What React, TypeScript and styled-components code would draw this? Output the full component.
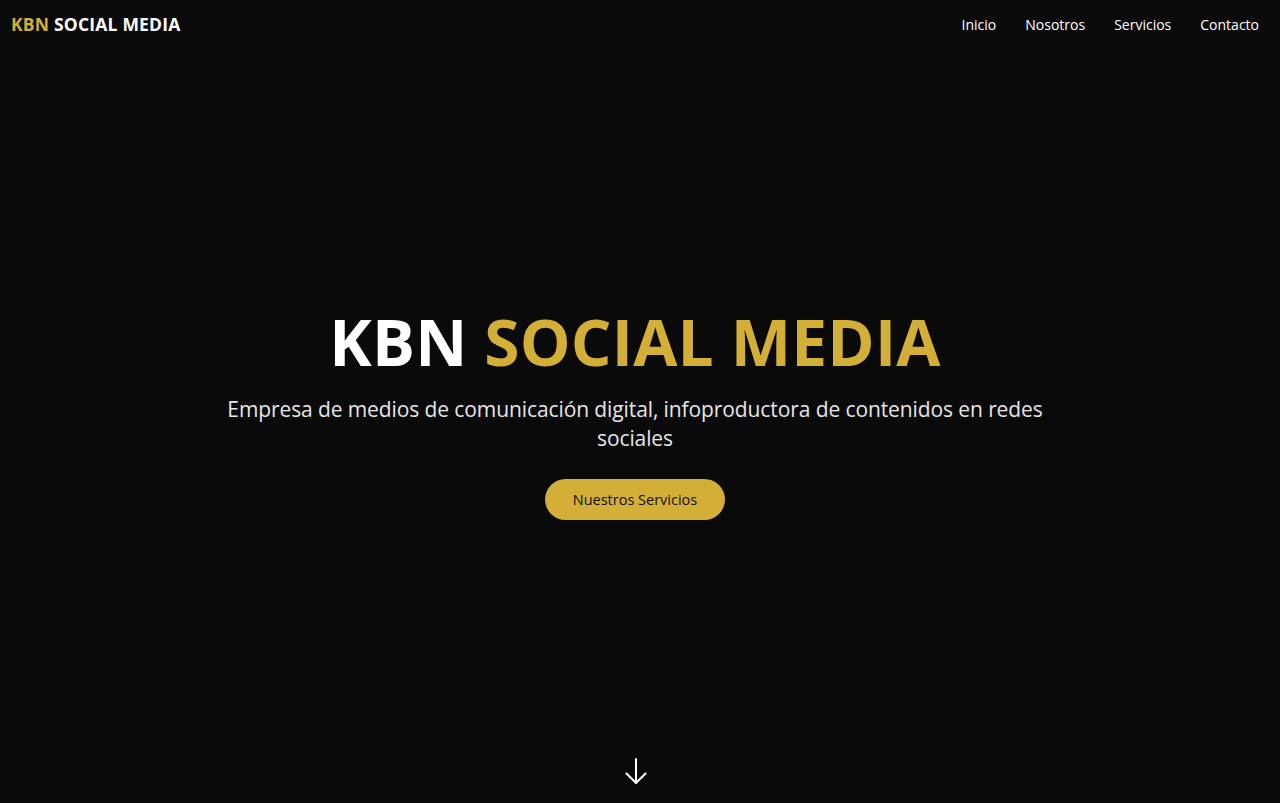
import React from "react";
import styled, { createGlobalStyle } from "styled-components";

const Global = createGlobalStyle`
  html, body { margin: 0; padding: 0; background: #0a0a0a; }
  body { font-family: "Open Sans", "Noto Sans", sans-serif; color: #fff; overflow: hidden; }
  * { box-sizing: border-box; }
`;

const Page = styled.div`
  position: relative;
  height: 803px;
  background: #0a0a0a;
`;

const Header = styled.header`
  position: absolute;
  top: 0;
  left: 0;
  right: 0;
  height: 48px;
  padding: 0 21px 0 11px;
  display: flex;
  align-items: center;
  justify-content: space-between;
  z-index: 2;
`;

const Logo = styled.div`
  font-size: 17.5px;
  font-weight: 700;
  letter-spacing: 0.2px;
  color: #fff;
`;

const Gold = styled.span`
  color: #d4af37;
`;

const Nav = styled.nav`
  display: flex;
  gap: 29px;
`;

const NavLink = styled.a`
  color: #fff;
  font-size: 14px;
  text-decoration: none;
  letter-spacing: 0;
`;

const Hero = styled.section`
  height: 803px;
  display: flex;
  flex-direction: column;
  align-items: center;
  justify-content: center;
  text-align: center;
  padding: 21px 10px 0 0;
`;

const Title = styled.h1`
  margin: 0;
  font-size: 64px;
  font-weight: 700;
  letter-spacing: 0.2px;
  line-height: 1.2;
  color: #fff;
`;

const Subtitle = styled.p`
  margin: 14px 0 26px;
  max-width: 850px;
  font-size: 21px;
  line-height: 29px;
  color: #e6e6e6;
  letter-spacing: -0.1px;
`;

const Button = styled.a`
  display: inline-flex;
  align-items: center;
  justify-content: center;
  width: 180px;
  height: 41px;
  border-radius: 21px;
  background: #d4af37;
  color: #111;
  font-size: 14.5px;
  font-weight: 500;
  text-decoration: none;
`;

const ScrollDown = styled.div`
  position: absolute;
  left: calc(50% - 4.5px);
  bottom: 19px;
  transform: translateX(-50%);
  display: flex;
  color: #fff;
`;

export default function App() {
  return (
    <>
      <Global />
      <Page>
        <Header>
          <Logo>
            <Gold>KBN</Gold> SOCIAL MEDIA
          </Logo>
          <Nav>
            <NavLink href="#">Inicio</NavLink>
            <NavLink href="#">Nosotros</NavLink>
            <NavLink href="#">Servicios</NavLink>
            <NavLink href="#">Contacto</NavLink>
          </Nav>
        </Header>
        <Hero>
          <Title>
            KBN <Gold>SOCIAL MEDIA</Gold>
          </Title>
          <Subtitle>
            Empresa de medios de comunicación digital, infoproductora de contenidos en redes sociales
          </Subtitle>
          <Button href="#">Nuestros Servicios</Button>
        </Hero>
        <ScrollDown>
          <svg width="24" height="26" viewBox="0 0 24 26" fill="none" stroke="currentColor" strokeWidth="2" strokeLinecap="round" strokeLinejoin="round">
            <path d="M12 1v24" />
            <path d="M2.5 15.5L12 25l9.5-9.5" />
          </svg>
        </ScrollDown>
      </Page>
    </>
  );
}
